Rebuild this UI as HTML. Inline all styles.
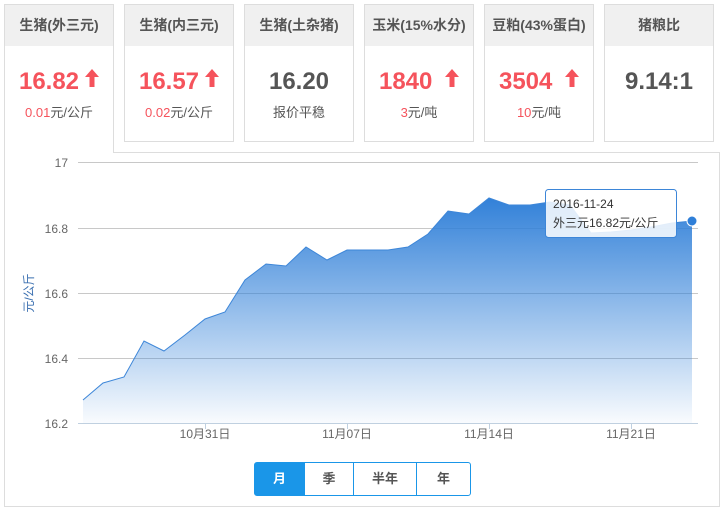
<!DOCTYPE html>
<html><head><meta charset="utf-8"><style>
body{margin:0;width:726px;height:512px;background:#fff;font-family:"Liberation Sans","Noto Sans CJK SC",sans-serif;position:relative;overflow:hidden}
.card{position:absolute;top:4px;width:108px;height:136px;border:1px solid #ddd;background:#fff;text-align:center}
.card .h{height:41px;background:#f0f0f0;font-size:14px;font-weight:bold;color:#555;line-height:41px}
.card .v{margin-top:22px;font-size:24px;font-weight:bold;color:#555;height:28px;line-height:28px}
.card .v.r{color:#f5535c}
.card .s{margin-top:6px;font-size:13px;color:#555}
.card .s b{font-weight:normal;color:#f5535c}
.arr{display:inline-block;margin-left:6px;vertical-align:2px}
#panel{position:absolute;left:4px;top:152px;width:714px;height:353px;border:1px solid #ddd;background:#fff}
.btns{position:absolute;left:254px;top:462px;height:32px;display:flex;border:1px solid #1a96e8;border-radius:3px;font-size:13px;font-weight:bold;color:#555}
.btns div{line-height:32px;text-align:center;border-left:1px solid #1a96e8}
.btns div:first-child{border-left:none;background:#1a96e8;color:#fff}
</style></head><body>
<div id="panel"></div>
<div class="card" style="left:4px;height:148px;border-bottom:none;z-index:2"><div class="h">生猪(外三元)</div><div class="v r">16.82<svg class="arr" width="14" height="18" viewBox="0 0 14 18"><path d="M7 0L14 8H9.5V18H4.5V8H0Z" fill="#f5535c"/></svg></div><div class="s"><b>0.01</b>元/公斤</div></div>
<div class="card" style="left:124px"><div class="h">生猪(内三元)</div><div class="v r">16.57<svg class="arr" width="14" height="18" viewBox="0 0 14 18"><path d="M7 0L14 8H9.5V18H4.5V8H0Z" fill="#f5535c"/></svg></div><div class="s"><b>0.02</b>元/公斤</div></div>
<div class="card" style="left:244px"><div class="h">生猪(土杂猪)</div><div class="v">16.20</div><div class="s">报价平稳</div></div>
<div class="card" style="left:364px"><div class="h">玉米(15%水分)</div><div class="v r">1840 <svg class="arr" width="14" height="18" viewBox="0 0 14 18"><path d="M7 0L14 8H9.5V18H4.5V8H0Z" fill="#f5535c"/></svg></div><div class="s"><b>3</b>元/吨</div></div>
<div class="card" style="left:484px"><div class="h">豆粕(43%蛋白)</div><div class="v r">3504 <svg class="arr" width="14" height="18" viewBox="0 0 14 18"><path d="M7 0L14 8H9.5V18H4.5V8H0Z" fill="#f5535c"/></svg></div><div class="s"><b>10</b>元/吨</div></div>
<div class="card" style="left:604px"><div class="h">猪粮比</div><div class="v">9.14:1</div></div>
<svg style="position:absolute;left:0;top:0" width="726" height="512">
<defs><linearGradient id="g" gradientUnits="userSpaceOnUse" x1="0" y1="195" x2="0" y2="423"><stop offset="0" stop-color="#2f7fd8"/><stop offset="1" stop-color="#2f7fd8" stop-opacity="0.03"/></linearGradient></defs>
<g stroke="#c8c8c8" stroke-width="1"><line x1="78" y1="162.5" x2="698" y2="162.5"/><line x1="78" y1="228.5" x2="698" y2="228.5"/><line x1="78" y1="293.5" x2="698" y2="293.5"/><line x1="78" y1="358.5" x2="698" y2="358.5"/></g>
<path d="M83 400L103 383L124 377L144 341L164 351L185 335L205 319L225 312L245 280L266 264L286 266L306 247L327 260L347 250L367 250L388 250L408 247L428 234L448 211L469 214L489 198L509 205L530 205L550 202L570 205L591 233L611 232L631 230L651 227L672 223L692 221L692 423L83 423Z" fill="url(#g)"/>
<path d="M83 400L103 383L124 377L144 341L164 351L185 335L205 319L225 312L245 280L266 264L286 266L306 247L327 260L347 250L367 250L388 250L408 247L428 234L448 211L469 214L489 198L509 205L530 205L550 202L570 205L591 233L611 232L631 230L651 227L672 223L692 221" fill="none" stroke="#3d86d8" stroke-width="1"/>
<line x1="78" y1="423.5" x2="698" y2="423.5" stroke="#c0d0e0"/>
<g stroke="#c0d0e0"><line x1="205.5" y1="423" x2="205.5" y2="429"/><line x1="347.5" y1="423" x2="347.5" y2="429"/><line x1="489.5" y1="423" x2="489.5" y2="429"/><line x1="631.5" y1="423" x2="631.5" y2="429"/></g>
<circle cx="692" cy="221" r="5" fill="#2f7fd8" stroke="#fff" stroke-width="1"/>
<g font-family="Liberation Sans,Noto Sans CJK SC,sans-serif" font-size="12" fill="#666" text-anchor="end"><text x="68" y="167">17</text><text x="68" y="233">16.8</text><text x="68" y="298">16.6</text><text x="68" y="363">16.4</text><text x="68" y="428">16.2</text></g>
<g font-family="Liberation Sans,Noto Sans CJK SC,sans-serif" font-size="12" fill="#666" text-anchor="middle"><text x="205" y="438">10月31日</text><text x="347" y="438">11月07日</text><text x="489" y="438">11月14日</text><text x="631" y="438">11月21日</text></g>
<text transform="translate(33,293) rotate(-90)" text-anchor="middle" font-family="Liberation Sans,Noto Sans CJK SC,sans-serif" font-size="12" fill="#3a6fb0">元/公斤</text>
<rect x="545.5" y="189.5" width="131" height="48" rx="3" fill="#fff" fill-opacity="0.85" stroke="#3d86d8"/>
<g font-family="Liberation Sans,Noto Sans CJK SC,sans-serif" font-size="12" fill="#333"><text x="553" y="208">2016-11-24</text><text x="553" y="227">外三元16.82元/公斤</text></g>
</svg>
<div class="btns"><div style="width:49px">月</div><div style="width:48px">季</div><div style="width:62px">半年</div><div style="width:53px">年</div></div>
</body></html>
